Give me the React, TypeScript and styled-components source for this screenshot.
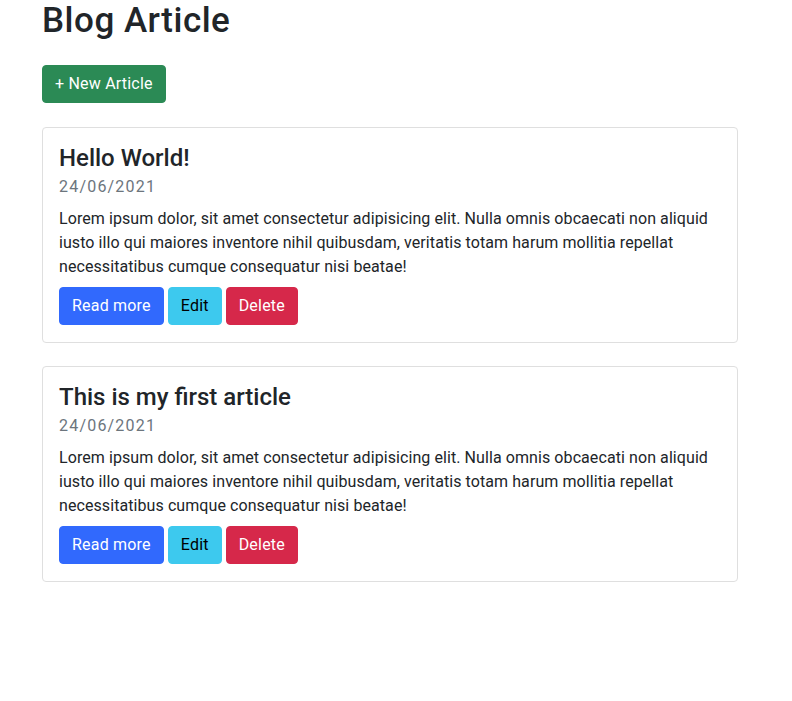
import React from "react";
import styled, { createGlobalStyle } from "styled-components";

const Global = createGlobalStyle`
  html, body { margin: 0; padding: 0; background: #fff; }
  body {
    font-family: Roboto, "Helvetica Neue", Arial, sans-serif;
    color: #212529;
    font-size: 16px;
    line-height: 1.5;
  }
  * { box-sizing: border-box; }
`;

const Container = styled.div`
  width: 696px;
  margin-left: 42px;
`;

const Title = styled.h1`
  font-size: 35px;
  font-weight: 500;
  line-height: 41px;
  letter-spacing: 0.5px;
  margin: 0 0 24px;
`;

type Variant = "success" | "primary" | "info" | "danger";

const colors: Record<Variant, string> = {
  success: "#2b8a55",
  primary: "#3169fd",
  info: "#3dc9ee",
  danger: "#d6284a",
};

const Btn = styled.button<{ $variant: Variant }>`
  display: inline-block;
  font-family: inherit;
  font-size: 16px;
  line-height: 24px;
  font-weight: 400;
  letter-spacing: 0.2px;
  padding: 6px 12px;
  border: 1px solid ${(p) => colors[p.$variant]};
  border-radius: 4px;
  cursor: pointer;
  color: ${(p) => (p.$variant === "info" ? "#000" : "#fff")};
  background: ${(p) => colors[p.$variant]};
`;

const List = styled.div`
  display: flex;
  flex-direction: column;
  gap: 23px;
  margin-top: 24px;
`;

const Card = styled.div`
  border: 1px solid #dfdfdf;
  border-radius: 4px;
  padding: 16px 16px 17px;
`;

const CardTitle = styled.h4`
  font-size: 24px;
  font-weight: 500;
  line-height: 1.2;
  margin: 0 0 8px;
`;

const CardSubtitle = styled.h6`
  font-size: 16px;
  font-weight: 400;
  line-height: 1.2;
  letter-spacing: 1.2px;
  color: #6c757d;
  margin: -4px 0 11px;
`;

const CardText = styled.p`
  margin: 0 0 8px;
  letter-spacing: 0.08px;
`;

const Actions = styled.div`
  display: flex;
  gap: 4px;
`;

const articles = [
  { title: "Hello World!", date: "24/06/2021" },
  { title: "This is my first article", date: "24/06/2021" },
];

const lorem =
  "Lorem ipsum dolor, sit amet consectetur adipisicing elit. Nulla omnis obcaecati non aliquid iusto illo qui maiores inventore nihil quibusdam, veritatis totam harum mollitia repellat necessitatibus cumque consequatur nisi beatae!";

export default function App() {
  return (
    <Container>
      <Global />
      <Title>Blog Article</Title>
      <Btn $variant="success">+ New Article</Btn>
      <List>
        {articles.map((a) => (
          <Card key={a.title}>
            <CardTitle>{a.title}</CardTitle>
            <CardSubtitle>{a.date}</CardSubtitle>
            <CardText>{lorem}</CardText>
            <Actions>
              <Btn $variant="primary">Read more</Btn>
              <Btn $variant="info">Edit</Btn>
              <Btn $variant="danger">Delete</Btn>
            </Actions>
          </Card>
        ))}
      </List>
    </Container>
  );
}
